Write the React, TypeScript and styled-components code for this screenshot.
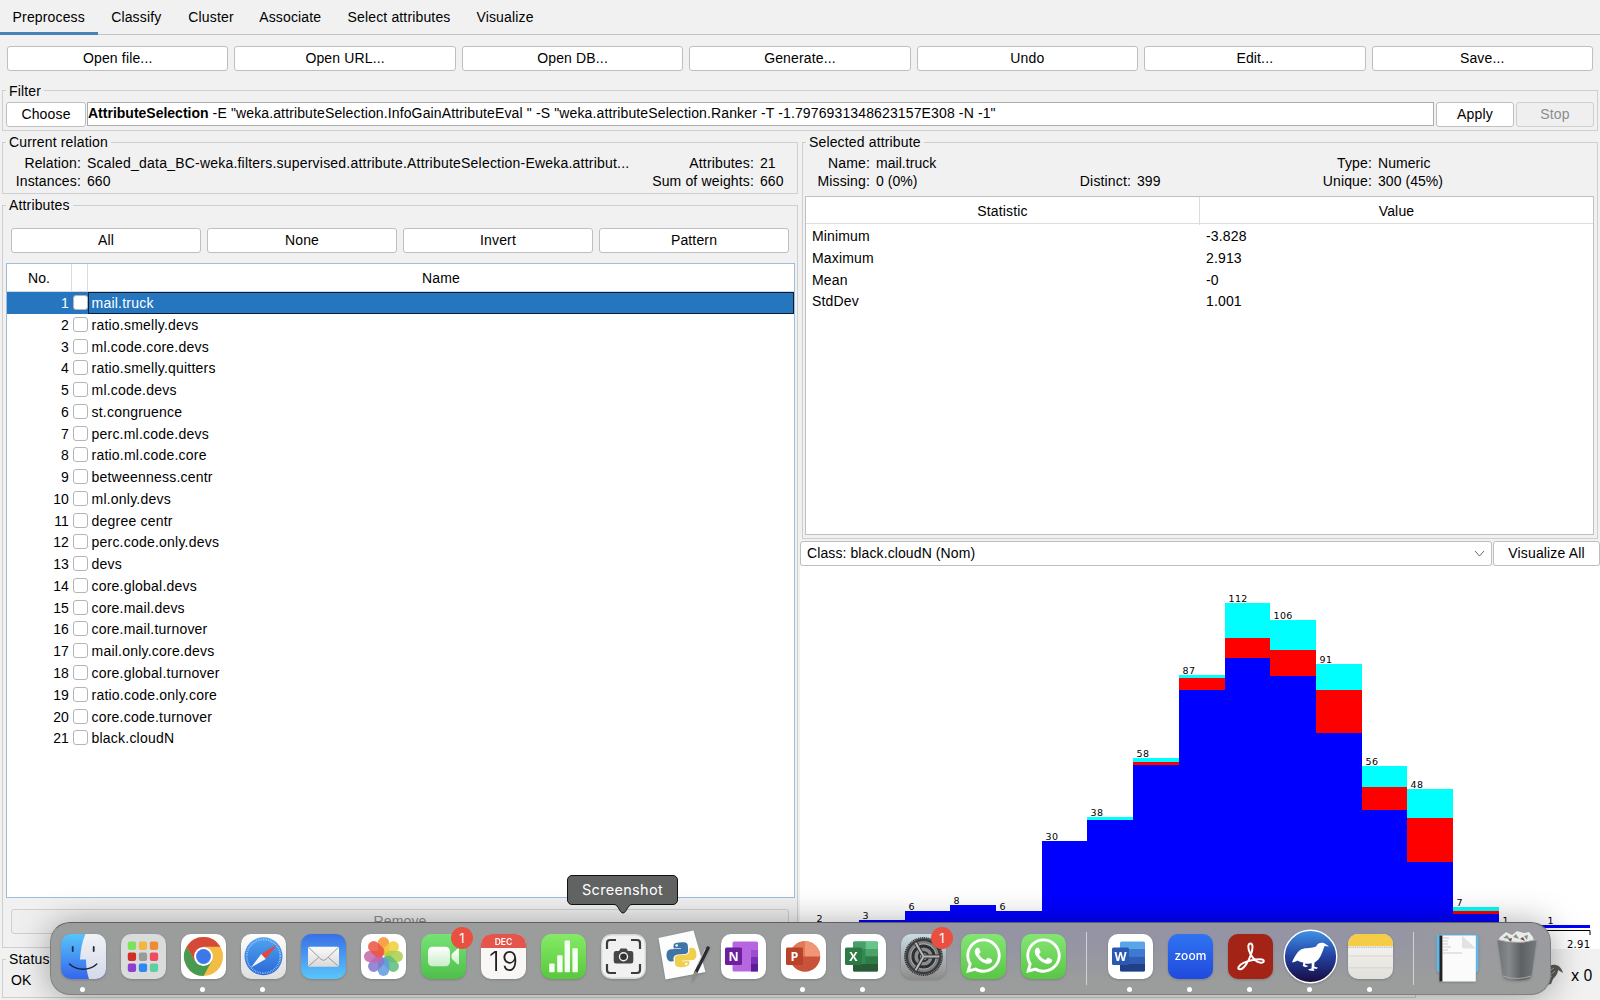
import React from "react";
import styled, { createGlobalStyle } from "styled-components";
import { FaWhatsapp } from "react-icons/fa";

const GlobalStyle = createGlobalStyle`
  * { box-sizing: border-box; }
  body {
    margin: 0;
    background: #f1f1f1;
    color: #000;
    font-family: "Liberation Sans", Arial, sans-serif;
    font-size: 14px;
    letter-spacing: 0.15px;
  }
`;

const Window = styled.div`
  position: relative;
  width: 1600px;
  height: 1000px;
  overflow: hidden;
  display: flex;
  flex-direction: column;
  background: #f1f1f1;
`;

/* ---------- tabs and toolbar ---------- */

const TabBar = styled.nav`
  display: flex;
  height: 35px;
  flex: none;
  border-bottom: 1px solid #c3c3c3;
`;

const Tab = styled.div<{ $active?: boolean; $width: number }>`
  width: ${(p) => p.$width}px;
  height: 35px;
  line-height: 34px;
  text-align: center;
  white-space: nowrap;
  border-bottom: ${(p) => (p.$active ? "3px solid #4a81b8" : "none")};
`;

const ButtonRow = styled.div<{ $pad: string; $gap: number }>`
  display: flex;
  flex: none;
  gap: ${(p) => p.$gap}px;
  padding: ${(p) => p.$pad};
`;

const Button = styled.button<{ $width?: number; $disabled?: boolean }>`
  flex: ${(p) => (p.$width ? "none" : "1 1 0")};
  width: ${(p) => (p.$width ? `${p.$width}px` : "auto")};
  height: 25px;
  padding: 0;
  font: inherit;
  letter-spacing: inherit;
  line-height: 23px;
  border: 1px solid #c0c0c0;
  border-radius: 3px;
  background: ${(p) => (p.$disabled ? "#efefef" : "#fff")};
  border-color: ${(p) => (p.$disabled ? "#cfcfcf" : "#bfbfbf")};
  color: ${(p) => (p.$disabled ? "#8c8c8c" : "#000")};
`;

/* ---------- titled group ---------- */

const Group = styled.fieldset<{ $height: number; $margin?: string; $width?: number }>`
  display: flex;
  flex-direction: column;
  flex: none;
  min-width: 0;
  height: ${(p) => p.$height}px;
  width: ${(p) => (p.$width ? `${p.$width}px` : "auto")};
  margin: ${(p) => p.$margin ?? "0"};
  padding: 0;
  border: 1px solid #cfcfcf;
`;

const Legend = styled.legend<{ $line?: number }>`
  margin-left: 3px;
  padding: 0 3px;
  height: 17px;
  line-height: ${(p) => p.$line ?? 17}px;
`;

/* ---------- filter ---------- */

const FilterRow = styled.div`
  display: flex;
  gap: 2px;
  padding: 3px 3px 0 3px;
`;

const FilterField = styled.div`
  flex: 1;
  height: 24px;
  margin-left: -1px;
  line-height: 21px;
  border: 1px solid #adadad;
  background: #fff;
  white-space: nowrap;
`;

const FilterText = styled.span`
  letter-spacing: 0.13px;

  b { letter-spacing: 0; }
`;

/* ---------- columns ---------- */

const Columns = styled.div`
  display: flex;
  flex: none;
  height: 815px;
`;

const LeftColumn = styled.div`
  display: flex;
  flex-direction: column;
  gap: 3px;
  width: 800px;
  padding: 0 2px;
`;

const RightColumn = styled.div`
  display: flex;
  flex-direction: column;
  width: 800px;
`;

const InfoGrid = styled.div<{ $columns: string }>`
  display: grid;
  grid-template-columns: ${(p) => p.$columns};
  grid-template-rows: 18px 19px;
  column-gap: 6px;
  padding-top: 3px;
  line-height: 18px;
  white-space: nowrap;
`;

const Key = styled.span`
  text-align: right;
`;

const Val = styled.span<{ $wide?: boolean }>`
  letter-spacing: ${(p) => (p.$wide ? "0.21px" : "0.05px")};
`;

/* ---------- attribute table ---------- */

const AttributeTable = styled.div`
  display: flex;
  flex-direction: column;
  height: 635px;
  margin: 10px 2px 0 3px;
  border: 1px solid #9dbfdd;
  background: #fff;
`;

const AttributeHead = styled.div`
  display: grid;
  grid-template-columns: 65px 16px 1fr;
  height: 28px;
  flex: none;
  line-height: 28px;
  border-bottom: 1px solid #cfd8e0;
`;

const HeadCell = styled.div<{ $last?: boolean }>`
  text-align: center;
  border-right: ${(p) => (p.$last ? "none" : "1px solid #dcdcdc")};
`;

const AttributeRow = styled.div<{ $selected: boolean }>`
  display: grid;
  grid-template-columns: 66px 15px 1fr;
  height: 21.77px;
  flex: none;
  line-height: 23px;
  background: ${(p) => (p.$selected ? "#2675bf" : "#fff")};
  color: ${(p) => (p.$selected ? "#fff" : "#000")};
`;

const Index = styled.div`
  padding-right: 4px;
  text-align: right;
`;

const Check = styled.div`
  width: 15px;
  height: 15px;
  margin-top: 3px;
  border: 1px solid #b5b5b5;
  border-radius: 3px;
  background: #fff;
`;

const NameCell = styled.div<{ $selected: boolean }>`
  height: 21.5px;
  padding-left: 2.5px;
  line-height: 21px;
  letter-spacing: 0.22px;
  border: 1px solid ${(p) => (p.$selected ? "#0a1c33" : "transparent")};
`;

/* ---------- statistics table ---------- */

const StatTable = styled.div`
  display: flex;
  flex-direction: column;
  height: 339px;
  margin: 5px 3px 0 2px;
  border: 1px solid #c0c0c0;
  background: #fff;
`;

const StatHead = styled.div`
  display: grid;
  grid-template-columns: 394px 1fr;
  height: 27px;
  flex: none;
  line-height: 28px;
  border-bottom: 1px solid #dedede;
`;

const StatRow = styled.div`
  display: grid;
  grid-template-columns: 394px 1fr;
  height: 21.8px;
  flex: none;
  padding-left: 6px;
  line-height: 24px;
`;

/* ---------- class selector ---------- */

const ClassRow = styled.div`
  display: flex;
  flex: none;
  gap: 1px;
  margin-top: 2px;
`;

const ClassSelect = styled.div`
  display: flex;
  flex: 1;
  align-items: center;
  justify-content: space-between;
  height: 25px;
  padding: 0 6px 1px 6px;
  border: 1px solid #bfbfbf;
  border-radius: 3px;
  background: #fff;
  letter-spacing: 0.1px;
`;

const ChartPanel = styled.div`
  height: 383px;
  flex: none;
  background: #fff;
  letter-spacing: 0;
`;

/* ---------- status ---------- */

const StatusRow = styled.div`
  display: flex;
  flex: none;
  gap: 130px;
  height: 50px;
  padding: 2px 0 0 2px;
`;

const StatusText = styled.div`
  padding: 3px 0 0 8px;
  line-height: 18px;
`;

const Counter = styled.div`
  display: flex;
  align-items: center;
  gap: 7px;
  height: 48px;
  font: 15.5px "Noto Sans", sans-serif;
`;

/* ---------- dock ---------- */

const Dock = styled.div`
  position: absolute;
  left: 50px;
  top: 922px;
  display: flex;
  width: 1501px;
  height: 73px;
  padding-left: 2px;
  border: 1px solid #7f8180;
  border-top-color: #5f6160;
  border-radius: 20px;
  letter-spacing: 0;
  background:
    linear-gradient(180deg, rgba(155, 157, 156, 0) 25%, #9b9d9c 85%),
    linear-gradient(90deg, #9b9d9c 0 48%, #9494a4 62% 88%, #9b9ba0 96%);
  box-shadow: 0 2px 34px rgba(0, 0, 0, 0.36);
`;

const DockCell = styled.div`
  position: relative;
  width: 60px;
  height: 71px;
  padding: 10.5px 0 0 7.5px;
`;

const DockDivider = styled.div<{ $width: number }>`
  display: flex;
  justify-content: center;
  width: ${(p) => p.$width}px;
  padding-top: 9px;

  &::before {
    content: "";
    width: 1px;
    height: 53px;
    background: #d2d2d5;
  }
`;

const RunningDot = styled.div`
  position: absolute;
  left: 27px;
  bottom: 2px;
  width: 5px;
  height: 5px;
  border-radius: 50%;
  background: #fff;
`;

const Badge = styled.div`
  position: absolute;
  left: 38px;
  top: 4px;
  width: 22px;
  height: 22px;
  border-radius: 50%;
  background: #e9503f;
  color: #fff;
  font: 13px/22px Inter, sans-serif;
  text-align: center;
`;

const Tooltip = styled.div`
  position: absolute;
  left: 567px;
  top: 875px;
  width: 111px;
  height: 30px;
  border: 1px solid #111;
  border-radius: 5px;
  background: #616363;
  color: #fff;
  font: 14.5px/28px Inter, sans-serif;
  letter-spacing: 0.3px;
  text-align: center;
`;

const TooltipTip = styled.svg`
  position: absolute;
  left: 46px;
  top: 28px;
`;

/* ---------- data ---------- */

const tabs: [string, number][] = [
  ["Preprocess", 97.5], ["Classify", 77.5], ["Cluster", 72], ["Associate", 86.5], ["Select attributes", 131], ["Visualize", 81],
];

const actions = ["Open file...", "Open URL...", "Open DB...", "Generate...", "Undo", "Edit...", "Save..."];

const attributes = [
  "mail.truck", "ratio.smelly.devs", "ml.code.core.devs", "ratio.smelly.quitters", "ml.code.devs",
  "st.congruence", "perc.ml.code.devs", "ratio.ml.code.core", "betweenness.centr", "ml.only.devs",
  "degree centr", "perc.code.only.devs", "devs", "core.global.devs", "core.mail.devs",
  "core.mail.turnover", "mail.only.core.devs", "core.global.turnover", "ratio.code.only.core",
  "core.code.turnover", "black.cloudN",
];

const statistics = [
  ["Minimum", "-3.828"], ["Maximum", "2.913"], ["Mean", "-0"], ["StdDev", "1.001"],
];

/* count, total top, red top, blue top */
const bins: [number, number, number, number][] = [
  [2, 357, 357, 357], [3, 353.5, 353.5, 353.5], [6, 345, 345, 345], [8, 339, 339, 339], [6, 345, 345, 345],
  [30, 275, 275, 275], [38, 251, 254.4, 254.4], [58, 192, 196, 199], [87, 109, 112, 124], [112, 37, 71.7, 92],
  [106, 54, 83.6, 110], [91, 98, 124, 167.3], [56, 200, 221, 243.7], [48, 223, 252.2, 296],
  [7, 341.3, 345, 348], [1, 359, 359, 359], [1, 359, 359, 359],
];

const Histogram = () => {
  const step = 45.68;
  const base = 362;
  return (
    <svg width="800" height="383" viewBox="0 0 800 383">
      {bins.map(([n, top, red, blue], i) => {
        const x = Math.round(13.4 + i * step);
        const w = Math.round(13.4 + (i + 1) * step) - x;
        return (
          <g key={i} shapeRendering="crispEdges">
            <rect x={x} y={top} width={w} height={red - top} fill="#00ffff" />
            <rect x={x} y={red} width={w} height={blue - red} fill="#ff0000" />
            <rect x={x} y={blue} width={w} height={base - blue} fill="#0000ff" />
            <text x={x + 3.5} y={top - 1} fontFamily="DejaVu Sans, sans-serif" fontSize="9.5" letterSpacing="0.35">{n}</text>
          </g>
        );
      })}
      <path d="M13 369V364.5H790V369" fill="none" stroke="#000" />
      <text x="767" y="382" fontFamily="DejaVu Sans, sans-serif" fontSize="10" textLength="23">2.91</text>
    </svg>
  );
};

/* ---------- dock icons ---------- */

const IconSvg = styled.svg`
  display: block;
  width: 45px;
  height: 45px;
  overflow: visible;
  filter: drop-shadow(0 1px 1px rgba(0, 0, 0, 0.18));
`;

const Icon = ({ children }: { children: React.ReactNode }) => <IconSvg viewBox="0 0 45 45">{children}</IconSvg>;

const Grad = ({ id, from, to }: { id: string; from: string; to: string }) => (
  <linearGradient id={id} x1="0" y1="0" x2="0" y2="1">
    <stop offset="0" stopColor={from} />
    <stop offset="1" stopColor={to} />
  </linearGradient>
);

const Tile = ({ fill = "#fff" }: { fill?: string }) => <rect width="45" height="45" rx="10" fill={fill} />;

const Finder = () => (
  <Icon>
    <defs>
      <Grad id="fin" from="#58c4fa" to="#3466ee" />
      <Grad id="finR" from="#f2f2f4" to="#d4daea" />
      <clipPath id="finC"><rect width="45" height="45" rx="10" /></clipPath>
    </defs>
    <Tile fill="url(#fin)" />
    <path clipPath="url(#finC)" d="M24.5 0C21 8 19.5 16 19 25.5H25C25 33 26 39 28 45H45V0Z" fill="url(#finR)" />
    <path d="M11.7 13v4M32.7 13v4" stroke="#1e2a44" strokeWidth="1.8" strokeLinecap="round" />
    <path d="M8.5 30C16 37 28.5 37 35.8 30" fill="none" stroke="#18233a" strokeWidth="1.4" strokeLinecap="round" />
  </Icon>
);

const padColors = ["#7be35b", "#f3b63f", "#ef8b33", "#cf2f27", "#9b9b9b", "#f24a5e", "#8e3fd1", "#2f87f0", "#5fcf9f"];

const Launchpad = () => (
  <Icon>
    <Tile fill="#dadbdb" />
    {padColors.map((c, i) => (
      <rect key={c} x={6.8 + (i % 3) * 11} y={7.6 + Math.floor(i / 3) * 11} width="8.3" height="8.3" rx="1.8" fill={c} />
    ))}
  </Icon>
);

const Chrome = () => (
  <Icon>
    <Tile />
    <circle cx="22.5" cy="22.5" r="19.5" fill="#f2bd42" />
    <path d="M5.6 12.75A19.5 19.5 0 0 0 22.5 42L30.7 27.2L22.5 22.5L14.3 27.2Z" fill="#479a50" />
    <path d="M5.6 12.75A19.5 19.5 0 0 1 39.4 12.75H22.5V22.5L14.3 27.2Z" fill="#d5493a" />
    <circle cx="22.5" cy="22.5" r="9.4" fill="#fff" />
    <circle cx="22.5" cy="22.5" r="7.4" fill="#3d78e8" />
  </Icon>
);

const Safari = () => (
  <Icon>
    <defs>
      <Grad id="saf" from="#4fa4ee" to="#2a68d8" />
      <Grad id="safT" from="#fdfdfd" to="#dedede" />
    </defs>
    <Tile fill="url(#safT)" />
    <circle cx="22.5" cy="22.3" r="19" fill="url(#saf)" />
    <circle cx="22.5" cy="22.3" r="16.8" fill="none" stroke="#b5d7f6" strokeWidth="1.8" strokeDasharray="0.6 1.1" />
    <path d="M36 10.5L24.8 25L20.2 20Z" fill="#e2483f" />
    <path d="M10 33.5L24.8 25L20.2 20Z" fill="#f4f4f4" />
  </Icon>
);

const Mail = () => (
  <Icon>
    <defs>
      <Grad id="mail" from="#3a6fe6" to="#5ac6fb" />
      <Grad id="mailE" from="#fafafa" to="#d9d9d9" />
    </defs>
    <Tile fill="url(#mail)" />
    <rect x="7" y="12.8" width="31" height="20" rx="1.5" fill="url(#mailE)" />
    <path d="M7.6 13.4L20 25.3Q22.5 27.6 25 25.3L37.4 13.4M7.6 32.2L17.8 23.4M37.4 32.2L27.2 23.4" fill="none" stroke="#9c9c9c" strokeWidth="1" />
  </Icon>
);

const petals = ["#f5932c", "#f2cf3a", "#a9cf4b", "#5bbd7a", "#5e9be0", "#8576cc", "#c466a8", "#ec5340"];

const Photos = () => (
  <Icon>
    <Tile />
    {petals.map((c, i) => (
      <rect key={c} x="16.8" y="3" width="11.4" height="18.5" rx="5.7" fill={c} opacity="0.85"
        transform={`rotate(${i * 45} 22.5 22.5)`} />
    ))}
  </Icon>
);

const FaceTime = () => (
  <Icon>
    <defs>
      <Grad id="ft" from="#76e276" to="#4fbf4b" />
      <Grad id="ftc" from="#fff" to="#c9eec7" />
    </defs>
    <Tile fill="url(#ft)" />
    <rect x="7" y="12.7" width="22" height="19.5" rx="4.5" fill="url(#ftc)" />
    <path d="M30.5 21.2Q30.5 20 31.5 19.2L36.5 14.7Q38 13.7 38 15.5V29.5Q38 31.2 36.5 30.2L31.5 25.6Q30.5 24.8 30.5 23.6Z" fill="url(#ftc)" />
  </Icon>
);

const Calendar = () => (
  <Icon>
    <Tile fill="#f8f7f6" />
    <path d="M0 14V10A10 10 0 0 1 10 0H35A10 10 0 0 1 45 10V14Z" fill="#e4564c" />
    <text x="22.5" y="10.6" textAnchor="middle" fontFamily="Inter, sans-serif" fontSize="8.5" fontWeight="600" fill="#fff">DEC</text>
    <text x="22" y="37.3" textAnchor="middle" fontFamily="Inter, sans-serif" fontSize="27" fontWeight="300" letterSpacing="-1" textLength="28" fill="#222">19</text>
  </Icon>
);

const Numbers = () => (
  <Icon>
    <defs><Grad id="num" from="#86ea66" to="#58c83c" /></defs>
    <Tile fill="url(#num)" />
    <g fill="#f6fff3">
      <rect x="8.2" y="29.5" width="5.4" height="8.8" rx="0.8" />
      <rect x="16.2" y="21.3" width="5.4" height="17" rx="0.8" />
      <rect x="23.6" y="6.5" width="5.4" height="31.8" rx="0.8" />
      <rect x="31.4" y="14.3" width="5.4" height="24" rx="0.8" />
    </g>
  </Icon>
);

const Screenshot = () => (
  <Icon>
    <Tile fill="#d6d6d6" />
    <rect x="1.4" y="1.4" width="42.2" height="42.2" rx="8.8" fill="#f1f1f1" />
    <path d="M6 15V9Q6 6 9 6H15M30 6H36Q39 6 39 9V15M39 30V36Q39 39 36 39H30M15 39H9Q6 39 6 36V30" fill="none" stroke="#3c3c3c" strokeWidth="2.2" />
    <path d="M15 17H18L19.5 14.5H25.5L27 17H30Q32.3 17 32.3 19.3V27Q32.3 29.5 30 29.5H15Q12.7 29.5 12.7 27V19.3Q12.7 17 15 17Z" fill="#464646" />
    <circle cx="22.5" cy="22.8" r="4" fill="#333" stroke="#f1f1f1" strokeWidth="1.4" />
  </Icon>
);

const Python = () => (
  <Icon>
    <path d="M-2.5 4L32.5 -3.5L44.5 38L4.5 45.5Z" fill="#fdfdfd" />
    <g transform="translate(4.5 7.5) rotate(-4) scale(0.067 0.056)">
      <path fill="#f0cf4c" d="M439.8 200.5c-7.7-30.9-22.3-54.2-53.4-54.2h-40.1v47.4c0 36.8-31.2 67.8-66.8 67.8H172.7c-29.2 0-53.4 25-53.4 54.3v101.8c0 29 25.2 46 53.4 54.3 33.8 9.9 66.3 11.7 106.8 0 26.9-7.8 53.4-23.5 53.4-54.3v-40.7H226.2v-13.6h160.2c31.1 0 42.6-21.7 53.4-54.2 11.2-33.5 10.7-65.7 0-108.6zM286.2 404c11.1 0 20.1 9.1 20.1 20.3 0 11.3-9 20.4-20.1 20.4-11 0-20.1-9.2-20.1-20.4.1-11.3 9.1-20.3 20.1-20.3z" />
      <path fill="#3f74a8" d="M167.8 248.1h106.8c29.7 0 53.4-24.5 53.4-54.3V91.9c0-29-24.4-50.7-53.4-55.6-35.8-5.9-74.7-5.6-106.8.1-45.2 8-53.4 24.7-53.4 55.6v40.7h106.9v13.6h-147c-31.1 0-58.3 18.7-66.8 54.2-9.8 40.7-10.2 66.1 0 108.6 7.6 31.6 25.7 54.2 56.8 54.2H101v-48.8c0-35.3 30.5-66.4 66.8-66.4zm-6.7-142.6c-11.1 0-20.1-9.1-20.1-20.3.1-11.3 9-20.4 20.1-20.4 11 0 20.1 9.2 20.1 20.4s-9 20.3-20.1 20.3z" />
    </g>
    <path d="M47 14L34.5 39" stroke="#2b2d33" strokeWidth="3.4" strokeLinecap="round" />
    <path d="M44.5 14.5L36.5 31" stroke="#c3c6cb" strokeWidth="0.9" />
    <path d="M33.6 36.5L30.3 49L37 39Z" fill="#8f8c84" />
  </Icon>
);

const letterStyle = { fontFamily: "Open Sans, sans-serif", fontWeight: 700, fontSize: 12.5 };

const OneNote = () => (
  <Icon>
    <Tile />
    <rect x="11.5" y="7.5" width="25.5" height="30" rx="1.5" fill="#b667e0" />
    <path d="M30 16H37V23H30Z" fill="#9b4fd0" />
    <path d="M30 23H37V30H30Z" fill="#7a2fb8" />
    <path d="M30 30H37V37.5H30Z" fill="#5b1c96" />
    <rect x="4" y="13.5" width="17" height="17.5" rx="1.5" fill="#6d1f9e" />
    <text x="12.5" y="26.8" textAnchor="middle" fill="#fff" {...letterStyle}>N</text>
  </Icon>
);

const PowerPoint = () => (
  <Icon>
    <Tile />
    <circle cx="24" cy="22.5" r="15.2" fill="#c8533a" />
    <path d="M24 7.3A15.2 15.2 0 0 0 8.8 22.5H24Z" fill="#e27a58" />
    <path d="M24 7.3A15.2 15.2 0 0 1 39.2 22.5H24Z" fill="#f09676" />
    <rect x="5" y="13.5" width="17" height="17.5" rx="1.5" fill="#b9432a" />
    <text x="13.5" y="26.8" textAnchor="middle" fill="#fff" {...letterStyle}>P</text>
  </Icon>
);

const Excel = () => (
  <Icon>
    <Tile />
    <rect x="12" y="7.5" width="25" height="30" rx="1.5" fill="#2f8a54" />
    <path d="M12 9Q12 7.5 13.5 7.5H24.5V15H12Z" fill="#4a9f68" />
    <path d="M24.5 7.5H35.5Q37 7.5 37 9V15H24.5Z" fill="#67c58a" />
    <path d="M24.5 15H37V22.5H24.5Z" fill="#4ba368" />
    <path d="M24.5 22.5H37V30H24.5Z" fill="#2f7a45" />
    <path d="M12 30H37V36Q37 37.5 35.5 37.5H13.5Q12 37.5 12 36Z" fill="#2a5b37" />
    <rect x="4" y="13.5" width="17" height="17.5" rx="1.5" fill="#2e7a45" />
    <text x="12.5" y="26.8" textAnchor="middle" fill="#fff" {...letterStyle}>X</text>
  </Icon>
);

const Word = () => (
  <Icon>
    <Tile />
    <rect x="12" y="7.5" width="25" height="30" rx="1.5" fill="#5aa5ea" />
    <path d="M12 15H37V22.5H12Z" fill="#3f7ad2" />
    <path d="M12 22.5H37V30H12Z" fill="#2f5cb4" />
    <path d="M12 30H37V36Q37 37.5 35.5 37.5H13.5Q12 37.5 12 36Z" fill="#213f86" />
    <rect x="4" y="13.5" width="17" height="17.5" rx="1.5" fill="#2b58b0" />
    <text x="12.5" y="26.8" textAnchor="middle" fill="#fff" {...letterStyle}>W</text>
  </Icon>
);

const Settings = () => (
  <Icon>
    <defs><Grad id="set" from="#c9dbe4" to="#8f8c8a" /></defs>
    <Tile fill="url(#set)" />
    <circle cx="22.5" cy="22.5" r="18.6" fill="#8d8d8d" stroke="#2f3032" strokeWidth="1.6" strokeDasharray="1.2 0.7" />
    <circle cx="22.5" cy="22.5" r="16.6" fill="#7d7e80" stroke="#3a3b3d" strokeWidth="2.4" />
    <circle cx="22.5" cy="22.5" r="13.2" fill="#a5a6a8" />
    <circle cx="22.5" cy="22.5" r="10.6" fill="#8b8c8e" stroke="#2e2f31" strokeWidth="3" />
    <circle cx="22.5" cy="22.5" r="4.6" fill="#9fa0a2" stroke="#2e2f31" strokeWidth="2" />
    <path d="M22.5 22.5H38M22.5 22.5L14.8 9.1M22.5 22.5L14.8 35.9" stroke="#38393b" strokeWidth="4" />
    <path d="M22.5 22.5H38.4M22.5 22.5L14.6 8.8M22.5 22.5L14.6 36.2" stroke="#b7b8ba" strokeWidth="2" />
  </Icon>
);

const WhatsApp = () => (
  <Icon>
    <defs><Grad id="wa" from="#85e574" to="#59c646" /></defs>
    <Tile fill="url(#wa)" />
    <FaWhatsapp x={2.7} y={2} size={39.5} color="#fff" />
  </Icon>
);

const Zoom = () => (
  <Icon>
    <defs><Grad id="zm" from="#2f74f2" to="#2049dd" /></defs>
    <Tile fill="url(#zm)" />
    <text x="22.5" y="26.2" textAnchor="middle" fontFamily="Inter, sans-serif" fontSize="12" fontWeight="500" textLength="32" fill="#fff">zoom</text>
  </Icon>
);

const Acrobat = () => (
  <Icon>
    <Tile fill="#a32317" />
    <path d="M22.3 9.6C25.5 9.4 24.8 15.2 23 20.5C20.3 28.2 15.8 35 12.2 35.3C8.6 35.4 10.4 31.3 15.5 28.9C20.3 26.6 27.3 25.2 32 25.2C37.2 25.3 36.6 28.9 33 28.7C27.5 28.3 22.3 21.6 20.8 16C19.9 12.4 20.2 9.8 22.3 9.6Z" fill="none" stroke="#fff" strokeWidth="2" />
  </Icon>
);

const Weka = () => (
  <Icon>
    <defs>
      <linearGradient id="wk" x1="0" y1="0" x2="0" y2="1">
        <stop offset="0" stopColor="#3f93e8" />
        <stop offset="0.5" stopColor="#2341a0" />
        <stop offset="1" stopColor="#170a3c" />
      </linearGradient>
    </defs>
    <circle cx="22.5" cy="22.5" r="26.3" fill="url(#wk)" stroke="#fff" strokeWidth="1.4" />
    <path d="M41 12.5L36.5 11.9C35.5 15 34.5 17.5 33.5 20C32 24 29.5 27 26.5 28.5L26.2 32.5L30 33.8L28.5 35L25.5 34.6L26.5 37L21.5 36.4L20 35.2L23.5 34.6L23.8 29.3C21.5 29.8 19 29.8 17.5 29.4L17 31L20.5 32L17.5 33.3L14.8 32L15.3 28.5C13 28.4 11 27.5 9.5 26.5C7.5 27.6 5.5 28.5 4 28.3C6.5 23 9 17.8 13.5 15.3C18 13.2 24 14.8 28.3 12.2C29.8 9.5 31.5 8.6 34.2 8.8C36.4 9 37.3 10 41 12.5Z" fill="#fff" />
  </Icon>
);

const Notes = () => (
  <Icon>
    <defs><Grad id="nt" from="#f9f8f5" to="#e2e0da" /></defs>
    <Tile fill="url(#nt)" />
    <path d="M0 12V10A10 10 0 0 1 10 0H35A10 10 0 0 1 45 10V12Z" fill="#f5cc45" />
    <path d="M0 13.2H45" stroke="#a8a59c" strokeWidth="1" strokeDasharray="1 0.8" />
    <path d="M0 22H45M0 33.8H45" stroke="#d2d1cc" strokeWidth="0.8" />
  </Icon>
);

const Documents = () => (
  <Icon>
    <rect x="1.5" y="0.5" width="42" height="38" rx="3" fill="#63b5e4" />
    <path d="M5 1.5H40.8V47.5H5Z" fill="#fbfbfb" />
    <path d="M4.5 1.5H7.4V47.5H4.5Z" fill="#222" />
    <path d="M8 4H14M8 7H13M8 10H13M8 13H16M8 16H13M8 19H27" stroke="#b9b9b9" strokeWidth="0.7" />
    <path d="M27 1.5L40.8 14.5H28.5Q27 14.5 27 13Z" fill="#e2e2e4" />
  </Icon>
);

const Trash = () => (
  <Icon>
    <defs>
      <linearGradient id="tr" x1="0" y1="0" x2="1" y2="0">
        <stop offset="0" stopColor="#6e7375" />
        <stop offset="0.3" stopColor="#85898b" />
        <stop offset="0.6" stopColor="#5d6163" />
        <stop offset="1" stopColor="#75797b" />
      </linearGradient>
    </defs>
    <path d="M4 4L11 -2L17 1L22 -3L29 -1L34 -2L38 3L39 8H5Z" fill="#e9ebe9" />
    <path d="M8 4L12 1L15 5ZM18 3L21 0L24 5ZM29 2L33 1L32 6Z" fill="#82938e" />
    <path d="M13 5L17 4L16 8ZM25 5L28 3L30 7Z" fill="#7a4a45" />
    <path d="M2.5 5.5Q22 11 41.5 5.5L36.5 42Q36 46.5 22 46.5Q8.5 46.5 7.8 42Z" fill="url(#tr)" />
    <path d="M2.5 5.5Q22 11 41.5 5.5" fill="none" stroke="#b4b8b9" strokeWidth="1.2" />
    <path d="M8 42Q22 47 36.3 42" fill="none" stroke="#a2a6a7" strokeWidth="1" />
  </Icon>
);

type DockItem = { icon: React.FC; running?: boolean; badge?: string };

const apps: DockItem[] = [
  { icon: Finder, running: true }, { icon: Launchpad }, { icon: Chrome, running: true }, { icon: Safari, running: true },
  { icon: Mail }, { icon: Photos }, { icon: FaceTime, badge: "1" }, { icon: Calendar }, { icon: Numbers },
  { icon: Screenshot }, { icon: Python }, { icon: OneNote }, { icon: PowerPoint, running: true },
  { icon: Excel, running: true }, { icon: Settings, badge: "1" }, { icon: WhatsApp, running: true }, { icon: WhatsApp },
];
const recents: DockItem[] = [
  { icon: Word, running: true }, { icon: Zoom, running: true }, { icon: Acrobat, running: true },
  { icon: Weka, running: true }, { icon: Notes, running: true },
];
const places: DockItem[] = [{ icon: Documents }, { icon: Trash }];

const DockItems = ({ items }: { items: DockItem[] }) => (
  <>
    {items.map(({ icon: Glyph, running, badge }, i) => (
      <DockCell key={i}>
        <Glyph />
        {badge && <Badge>{badge}</Badge>}
        {running && <RunningDot />}
      </DockCell>
    ))}
  </>
);

const SmallBird = () => (
  <svg width="18" height="22" viewBox="0 0 18 22">
    <path d="M0 6C3 2 6 0 10 1C14 2 16 5 17 9L12 6C12 10 9 13 7 15L5 20L1 21L3 16L0 17Z" fill="#5b5a56" />
    <path d="M2 8L8 4M3 12L9 7M1 15L6 12" stroke="#aaa69e" strokeWidth="1" />
  </svg>
);

export default function App() {
  return (
    <Window>
      <GlobalStyle />
      <TabBar>
        {tabs.map(([label, width], i) => (
          <Tab key={label} $width={width} $active={i === 0}>{label}</Tab>
        ))}
      </TabBar>

      <ButtonRow $pad="11px 7px 0" $gap={6}>
        {actions.map((label) => <Button key={label}>{label}</Button>)}
      </ButtonRow>

      <Group $height={49} $margin="11px 2px 3px">
        <Legend $line={18}>Filter</Legend>
        <FilterRow>
          <Button $width={80}>Choose</Button>
          <FilterField>
            <FilterText>
              <b>AttributeSelection</b> -E "weka.attributeSelection.InfoGainAttributeEval " -S "weka.attributeSelection.Ranker -T -1.7976931348623157E308 -N -1"
            </FilterText>
          </FilterField>
          <Button $width={78}>Apply</Button>
          <Button $width={78} $disabled>Stop</Button>
        </FilterRow>
      </Group>

      <Columns>
        <LeftColumn>
          <Group $height={60}>
            <Legend>Current relation</Legend>
            <InfoGrid $columns="78px 551px 110px 40px">
              <Key>Relation:</Key>
              <Val $wide>Scaled_data_BC-weka.filters.supervised.attribute.AttributeSelection-Eweka.attribut...</Val>
              <Key>Attributes:</Key>
              <Val>21</Val>
              <Key>Instances:</Key>
              <Val>660</Val>
              <Key>Sum of weights:</Key>
              <Val>660</Val>
            </InfoGrid>
          </Group>

          <Group $height={751}>
            <Legend>Attributes</Legend>
            <ButtonRow $pad="14px 8px 0" $gap={6}>
              {["All", "None", "Invert", "Pattern"].map((label) => <Button key={label}>{label}</Button>)}
            </ButtonRow>
            <AttributeTable>
              <AttributeHead>
                <HeadCell>No.</HeadCell>
                <HeadCell />
                <HeadCell $last>Name</HeadCell>
              </AttributeHead>
              {attributes.map((name, i) => (
                <AttributeRow key={name} $selected={i === 0}>
                  <Index>{i + 1}</Index>
                  <Check />
                  <NameCell $selected={i === 0}>{name}</NameCell>
                </AttributeRow>
              ))}
            </AttributeTable>
            <ButtonRow $pad="11px 8px 0" $gap={0}>
              <Button $disabled>Remove</Button>
            </ButtonRow>
          </Group>
        </LeftColumn>

        <RightColumn>
          <Group $height={405} $margin="0 2px">
            <Legend>Selected attribute</Legend>
            <InfoGrid $columns="67px 165px 84px 140px 89px 1fr">
              <Key>Name:</Key>
              <Val>mail.truck</Val>
              <Key />
              <Val />
              <Key>Type:</Key>
              <Val>Numeric</Val>
              <Key>Missing:</Key>
              <Val>0 (0%)</Val>
              <Key>Distinct:</Key>
              <Val>399</Val>
              <Key>Unique:</Key>
              <Val>300 (45%)</Val>
            </InfoGrid>
            <StatTable>
              <StatHead>
                <HeadCell>Statistic</HeadCell>
                <HeadCell $last>Value</HeadCell>
              </StatHead>
              {statistics.map(([name, value]) => (
                <StatRow key={name}>
                  <span>{name}</span>
                  <span>{value}</span>
                </StatRow>
              ))}
            </StatTable>
          </Group>
          <ClassRow>
            <ClassSelect>
              <span>Class: black.cloudN (Nom)</span>
              <svg width="11" height="7" viewBox="0 0 11 7">
                <path d="M1 1L5.5 6L10 1" fill="none" stroke="#666" />
              </svg>
            </ClassSelect>
            <Button $width={107}>Visualize All</Button>
          </ClassRow>
          <ChartPanel>
            <Histogram />
          </ChartPanel>
        </RightColumn>
      </Columns>

      <StatusRow>
        <Group $height={47} $width={1414}>
          <Legend>Status</Legend>
          <StatusText>OK</StatusText>
        </Group>
        <Counter>
          <SmallBird />
          <span>x 0</span>
        </Counter>
      </StatusRow>

      <Dock>
        <DockItems items={apps} />
        <DockDivider $width={27} />
        <DockItems items={recents} />
        <DockDivider $width={27} />
        <DockItems items={places} />
      </Dock>
      <Tooltip>
        Screenshot
        <TooltipTip width="18" height="10" viewBox="0 0 18 10">
          <path d="M0 0H18V0.5C13.5 0.5 12.5 9 9 9C5.5 9 4.5 0.5 0 0.5Z" fill="#616363" />
          <path d="M0 0.5C4.5 0.5 5.5 9 9 9C12.5 9 13.5 0.5 18 0.5" fill="none" stroke="#111" />
        </TooltipTip>
      </Tooltip>
    </Window>
  );
}
